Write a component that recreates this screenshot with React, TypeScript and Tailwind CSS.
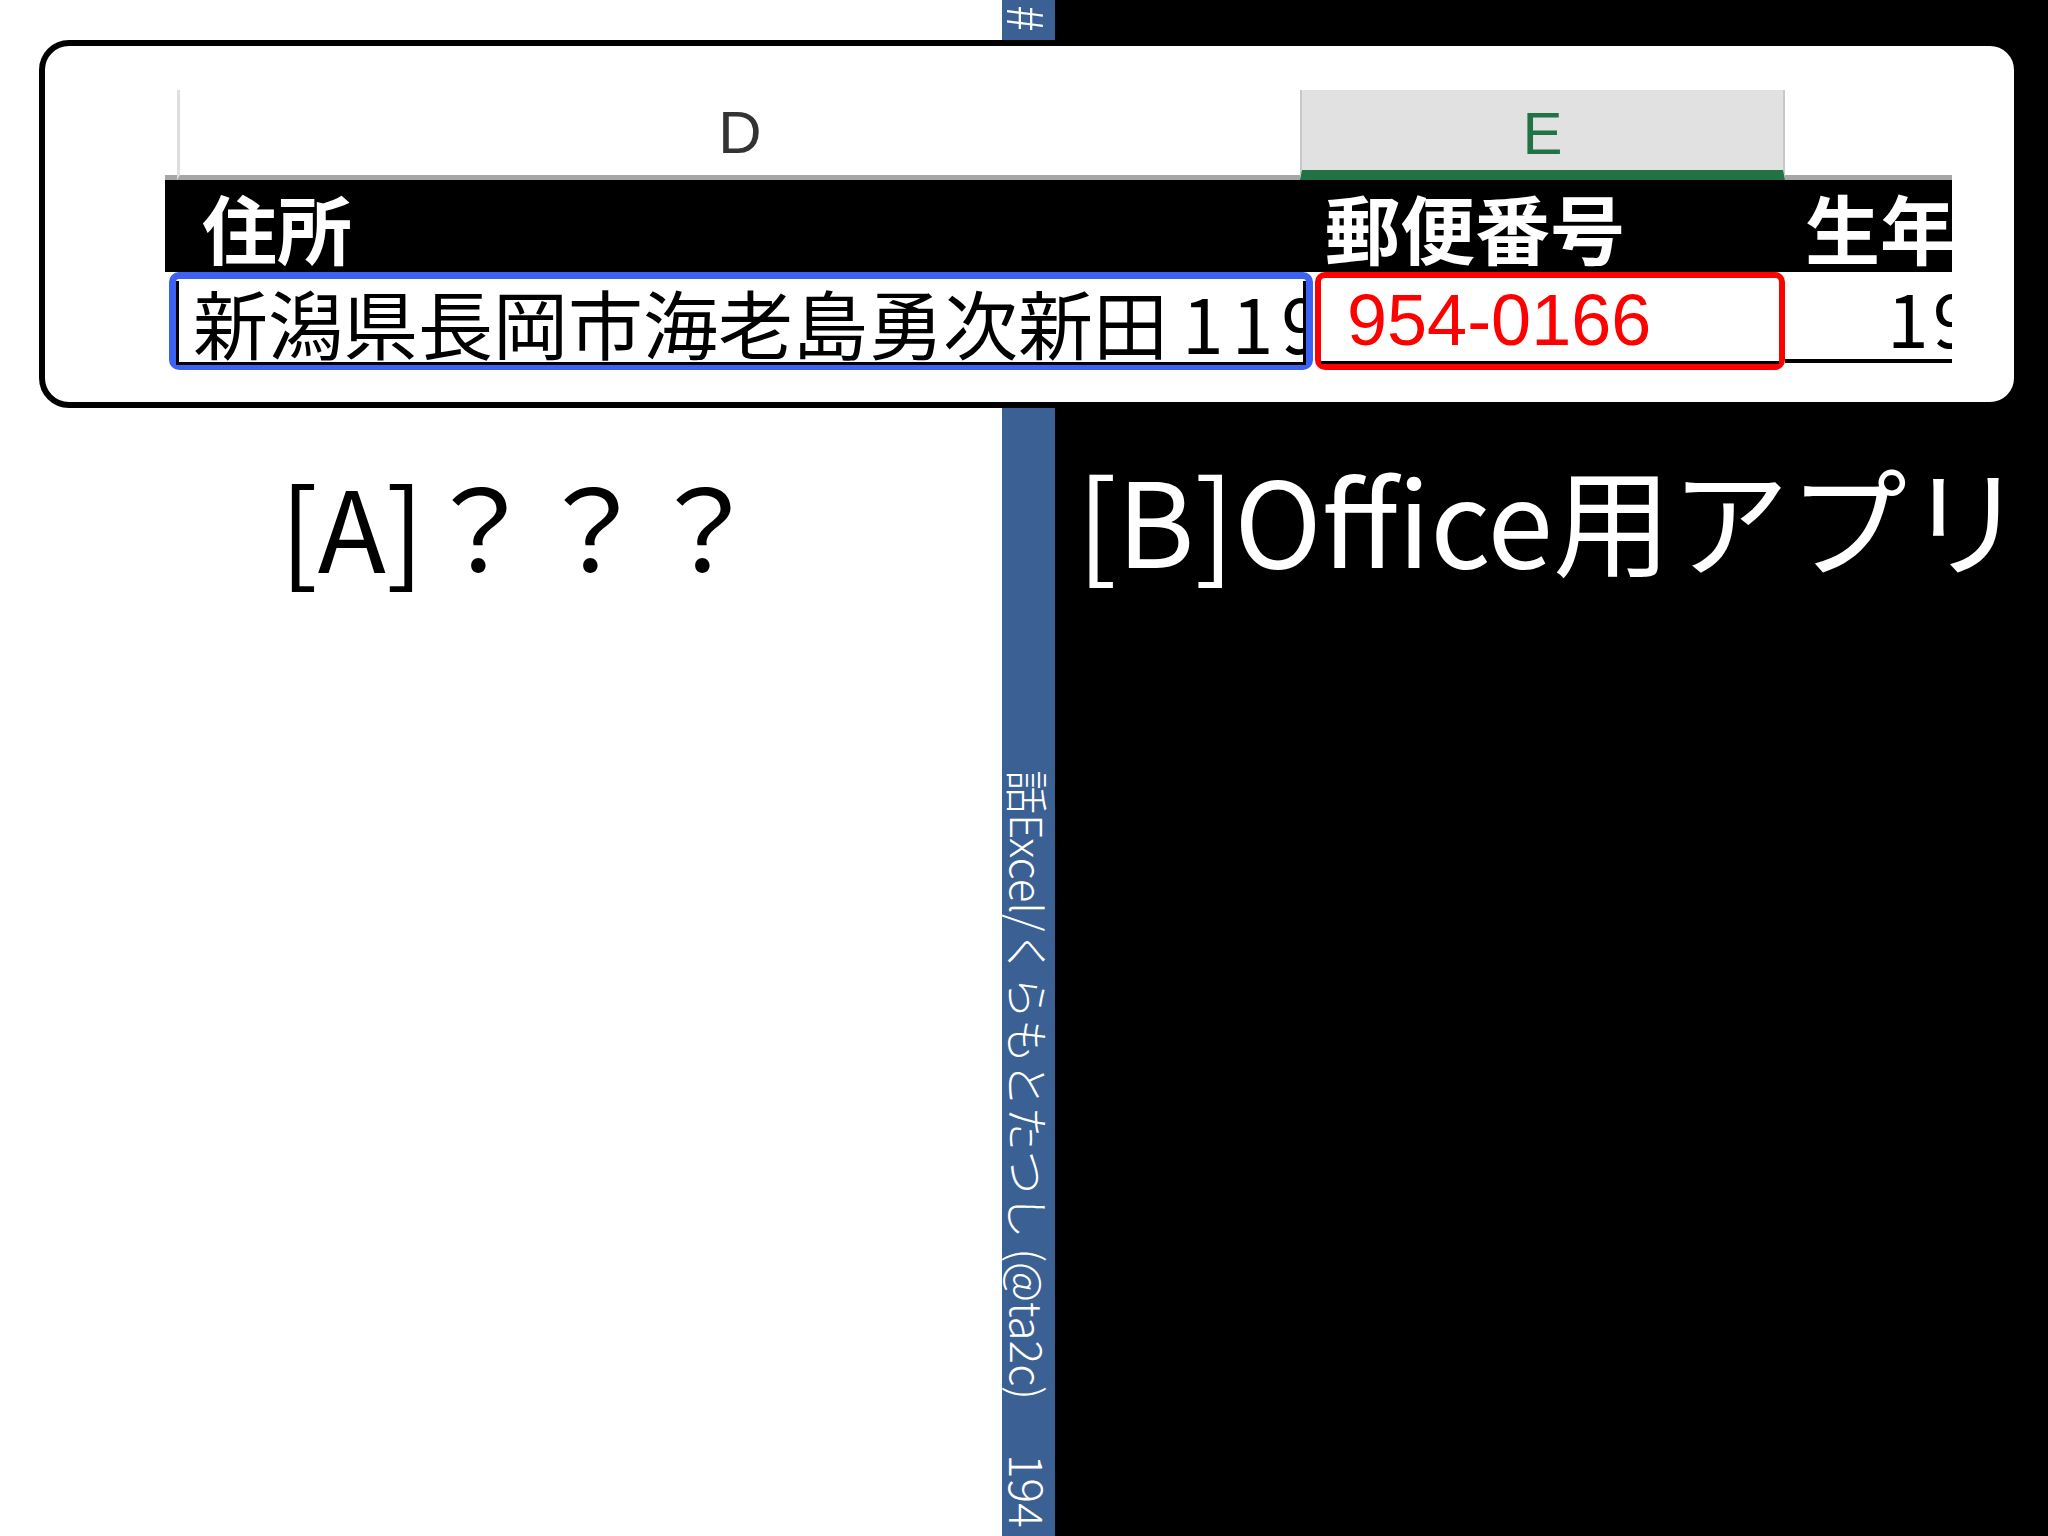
import React from "react";

const jp = "font-['Noto_Sans_CJK_JP',sans-serif]";

export default function App() {
  return (
    <div className="relative w-[2048px] h-[1536px] flex overflow-hidden">
      {/* left slide half */}
      <div className="w-[1002px] h-full bg-white pt-[468px] pl-[280px]">
        <p className={`${jp} text-[112px] leading-none text-black whitespace-nowrap`}>
          [A]？？？
        </p>
      </div>

      {/* footer bar */}
      <div className="w-[53px] h-full bg-[#3b6093] flex flex-col items-center pt-[5px] pb-[8px] overflow-hidden">
        <span
          className={`${jp} [writing-mode:vertical-rl] [text-orientation:sideways] text-[50px] leading-none font-light text-white whitespace-nowrap`}
        >
          # Excel業務改善
        </span>
        <span
          className={`${jp} mt-auto [writing-mode:vertical-rl] [text-orientation:sideways] text-[44px] leading-none font-light text-white whitespace-nowrap`}
        >
          話Excel/くらもとたつし (@ta2c)
        </span>
        <span
          className={`${jp} mt-[54px] [writing-mode:vertical-rl] [text-orientation:sideways] text-[46px] leading-none font-light text-white`}
        >
          194
        </span>
      </div>

      {/* right slide half */}
      <div className="flex-1 h-full bg-black pt-[458px] pl-[22px] overflow-hidden">
        <p className={`${jp} text-[118px] leading-none text-white whitespace-nowrap`}>
          [B]Office用アプリ
        </p>
      </div>

      {/* spreadsheet capture laid over both halves */}
      <div className="absolute left-[39px] top-[40px] w-[1981px] h-[368px] bg-white border-[6px] border-black rounded-[30px] pl-[120px] pt-[44px]">
        <div className="w-[1787px] flex flex-col">
          {/* column letters */}
          <div className="flex h-[90px]">
            <div className="w-[12px] border-b-[5px] border-[#a6a6a6]" />
            <div className="w-[1123px] border-l-[3px] border-l-[#dedede] border-b-[5px] border-b-[#a6a6a6] flex items-center justify-center">
              <span className="font-['Liberation_Sans',sans-serif] text-[60px] leading-none text-[#333]">D</span>
            </div>
            <div className="w-[485px] bg-[#e1e1e1] border-l-2 border-l-[#c8c8c8] border-r-2 border-r-[#c8c8c8] border-b-[10px] border-b-[#217346] flex items-center justify-center">
              <span className="font-['Liberation_Sans',sans-serif] text-[60px] leading-none text-[#217346] pt-[8px]">E</span>
            </div>
            <div className="w-[167px] border-b-[5px] border-[#a6a6a6]" />
          </div>

          {/* header row */}
          <div className={`${jp} flex h-[92px] bg-black text-white text-[75px] font-bold leading-none`}>
            <div className="w-[1135px] pl-[37px] flex items-center">住所</div>
            <div className="w-[485px] pl-[25px] flex items-center whitespace-nowrap">郵便番号</div>
            <div className="w-[167px] pl-[20px] flex items-center overflow-hidden whitespace-nowrap">生年月日</div>
          </div>

          {/* data row */}
          <div className="flex h-[98px]">
            <div className="w-[4px] shrink-0" />
            <div className="w-[1144px] shrink-0 border-[7px] border-[#3b62f2] rounded-[10px]">
              <div className="h-full border-l-[3px] border-r-[3px] border-b-[3px] border-black mt-[2px] pl-[14px] flex items-center overflow-hidden">
                <span className={`${jp} text-[75px] leading-none text-black whitespace-nowrap`}>
                  新潟県長岡市海老島勇次新田<span className="pl-[14px] tracking-[8px]">1193-9</span>
                </span>
              </div>
            </div>
            <div className="w-[2px] shrink-0" />
            <div className="w-[470px] shrink-0 border-[6px] border-[#ff0000] rounded-[10px]">
              <div className="h-full border-b-[3px] border-black pl-[26px] flex items-center">
                <span className="font-['Liberation_Sans',sans-serif] text-[72px] leading-none text-[#ff0000]">
                  954-0166
                </span>
              </div>
            </div>
            <div className="w-[167px] shrink-0 h-[91px] border-b-4 border-black flex items-center overflow-hidden">
              <span className={`${jp} pl-[102px] text-[75px] leading-none text-black whitespace-nowrap tracking-[4px]`}>
                1985/4/10
              </span>
            </div>
          </div>
        </div>
      </div>
    </div>
  );
}
